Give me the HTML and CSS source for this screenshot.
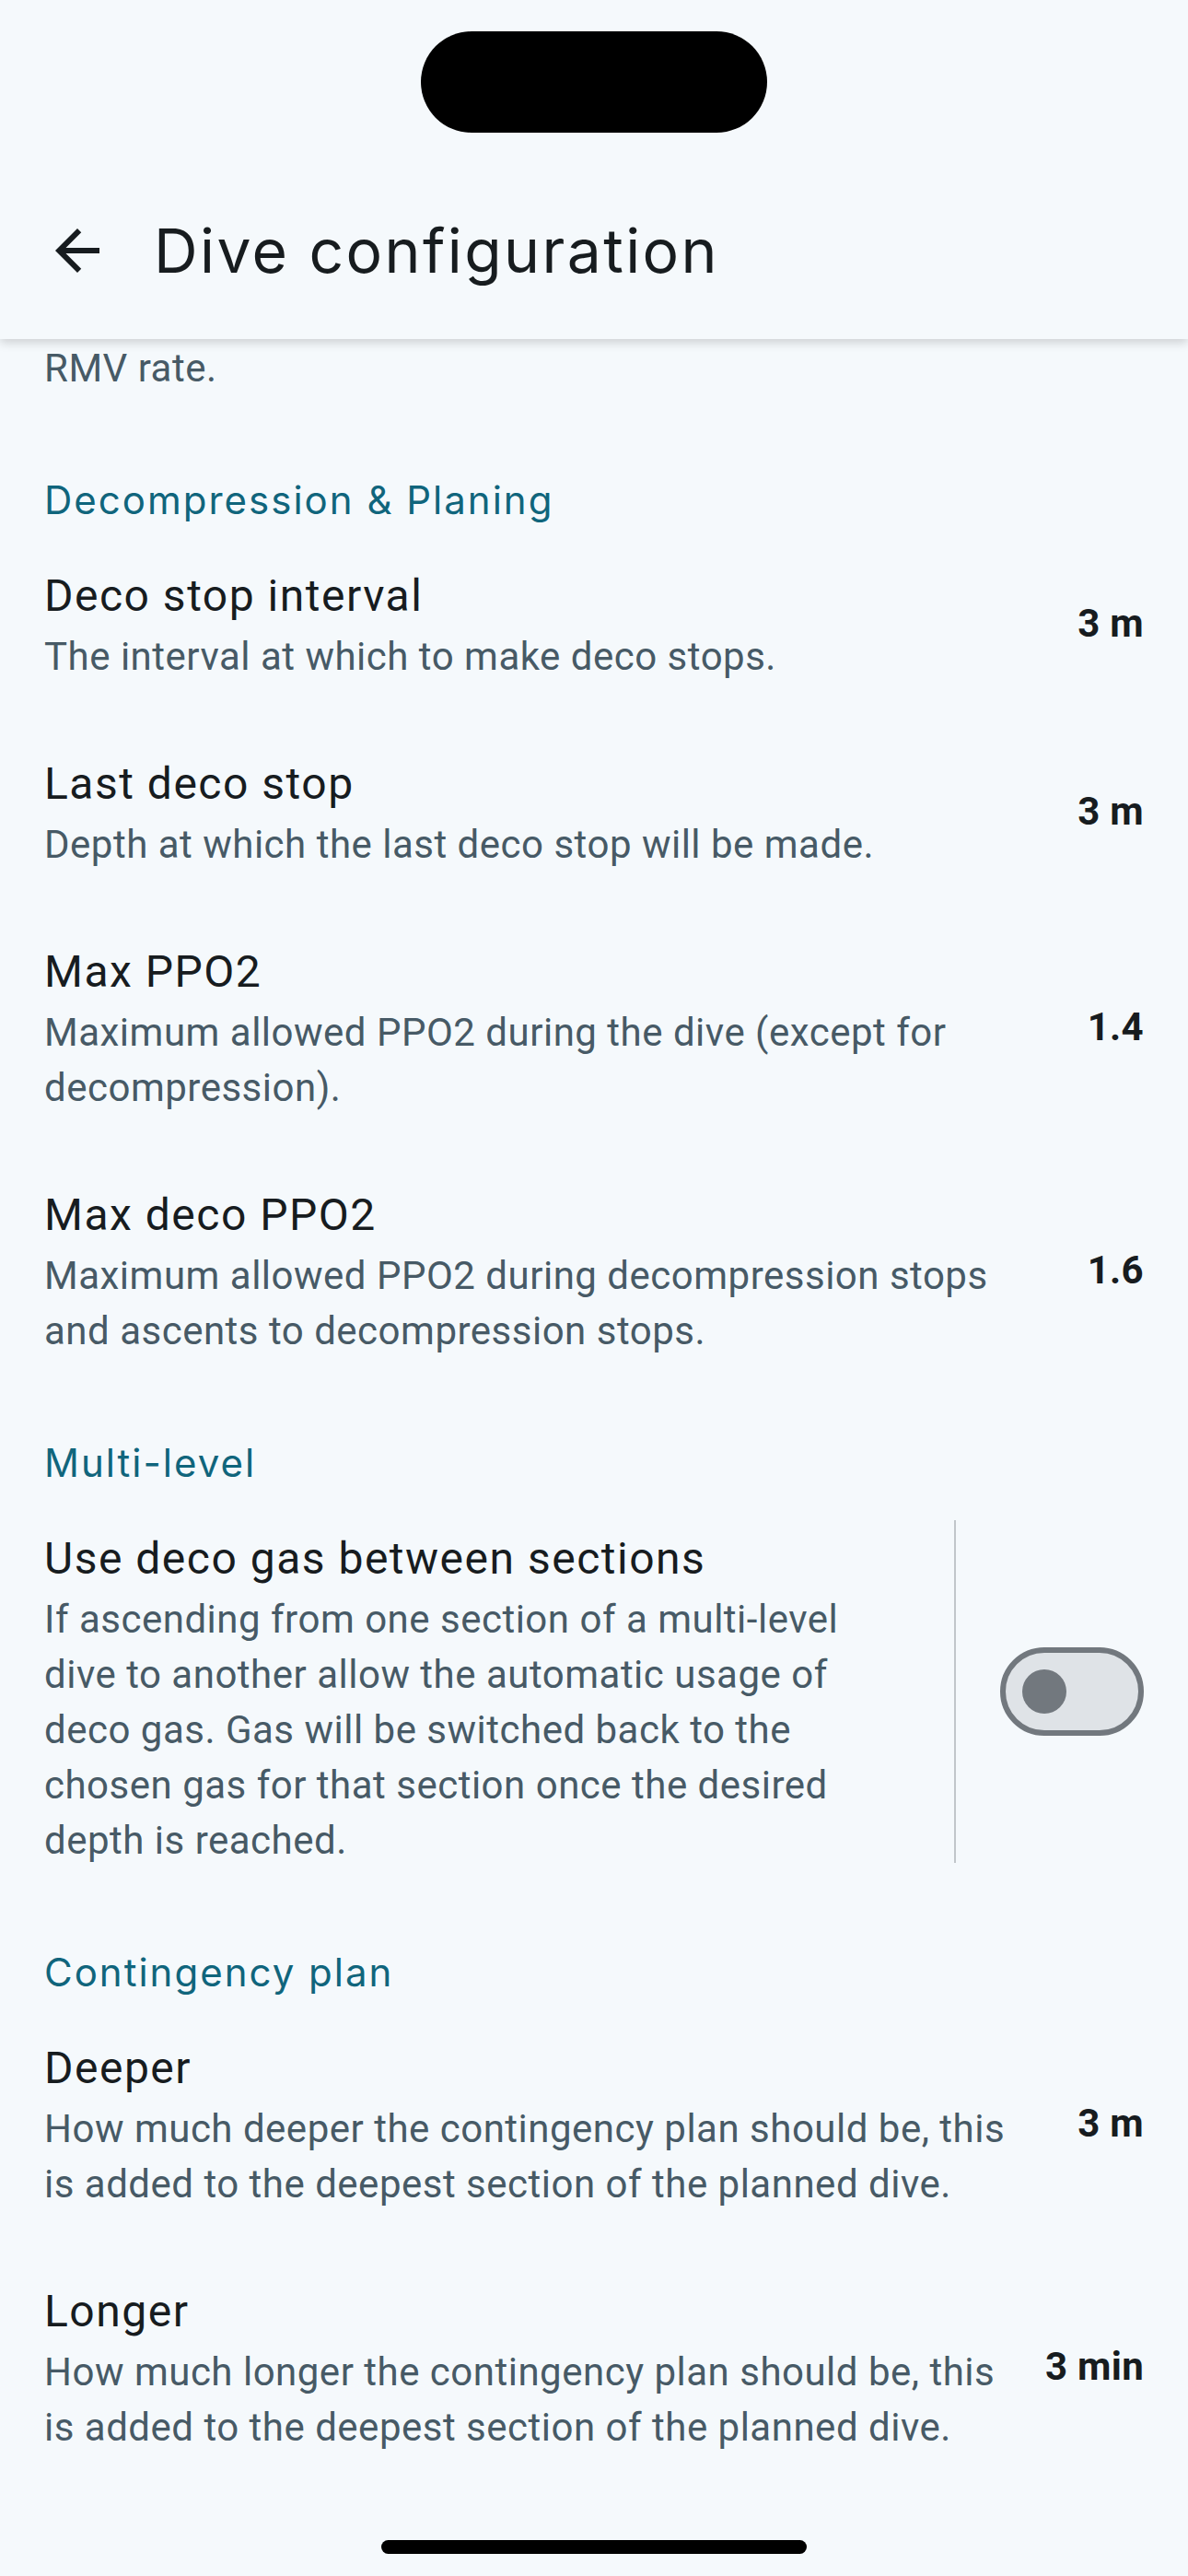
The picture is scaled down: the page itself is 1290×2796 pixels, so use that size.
FILE: index.html
```html
<!DOCTYPE html>
<html lang="en">
<head>
<meta charset="utf-8">
<title>Dive configuration</title>
<link rel="stylesheet" href="styles.css">
</head>
<body>
<div class="status">
  <div class="notch"></div>
</div>
<header class="topbar">
  <svg class="back" viewBox="0 0 24 24" width="72" height="72" aria-hidden="true">
    <path d="M20 11H7.83l5.59-5.59L12 4l-8 8 8 8 1.41-1.41L7.83 13H20v-2z" fill="#171c1f"/>
  </svg>
  <h1 class="title">Dive configuration</h1>
</header>
<main class="content">
  <div class="item partial">
    <div class="text">
      <div class="desc">RMV rate.</div>
    </div>
  </div>

  <div class="cat">Decompression &amp; Planing</div>

  <div class="item">
    <div class="text">
      <div class="name">Deco stop interval</div>
      <div class="desc">The interval at which to make deco stops.</div>
    </div>
    <div class="value">3 m</div>
  </div>

  <div class="item">
    <div class="text">
      <div class="name">Last deco stop</div>
      <div class="desc">Depth at which the last deco stop will be made.</div>
    </div>
    <div class="value">3 m</div>
  </div>

  <div class="item">
    <div class="text">
      <div class="name">Max PPO2</div>
      <div class="desc">Maximum allowed PPO2 during the dive (except for decompression).</div>
    </div>
    <div class="value">1.4</div>
  </div>

  <div class="item">
    <div class="text">
      <div class="name">Max deco PPO2</div>
      <div class="desc">Maximum allowed PPO2 during decompression stops and ascents to decompression stops.</div>
    </div>
    <div class="value">1.6</div>
  </div>

  <div class="cat">Multi-level</div>

  <div class="item switch-item">
    <div class="text">
      <div class="name">Use deco gas between sections</div>
      <div class="desc">If ascending from one section of a multi-level dive to another allow the automatic usage of deco gas. Gas will be switched back to the chosen gas for that section once the desired depth is reached.</div>
    </div>
    <div class="divider"></div>
    <div class="switch"><span class="thumb"></span></div>
  </div>

  <div class="cat">Contingency plan</div>

  <div class="item">
    <div class="text">
      <div class="name">Deeper</div>
      <div class="desc">How much deeper the contingency plan should be, this is added to the deepest section of the planned dive.</div>
    </div>
    <div class="value">3 m</div>
  </div>

  <div class="item">
    <div class="text">
      <div class="name">Longer</div>
      <div class="desc">How much longer the contingency plan should be, this is added to the deepest section of the planned dive.</div>
    </div>
    <div class="value">3 min</div>
  </div>
</main>
<div class="home-indicator"></div>
</body>
</html>
```

FILE: styles.css
```css
* {
  box-sizing: border-box;
}

html, body {
  margin: 0;
  padding: 0;
  background: #f5f9fc;
}

body {
  width: 1290px;
  min-height: 2796px;
  font-family: Roboto, "Liberation Sans", sans-serif;
  color: #171c1f;
  overflow: hidden;
}

.status {
  height: 176px;
  padding-top: 34px;
  display: flex;
  justify-content: center;
}

.notch {
  width: 376px;
  height: 110px;
  border-radius: 55px;
  background: #000;
}

.topbar {
  height: 192px;
  display: flex;
  align-items: center;
  padding-left: 48px;
  background: #f5f9fc;
  box-shadow: 0 4px 10px rgba(0, 0, 0, 0.16);
  clip-path: inset(0 0 -40px 0);
  position: relative;
  z-index: 2;
}

.back {
  display: block;
  flex: none;
}

.title {
  margin: 0 0 0 47px;
  font-family: Inter, "Open Sans", sans-serif;
  font-weight: 400;
  font-size: 66px;
  line-height: 84px;
  color: #171c1f;
  letter-spacing: 2.4px;
}

.content {
  display: flex;
  flex-direction: column;
}

.item {
  display: flex;
  align-items: center;
  padding: 36px 48px;
}

.item.partial {
  padding-top: 2px;
}

.text {
  flex: 1;
  min-width: 0;
}

.name {
  font-size: 48px;
  line-height: 72px;
  letter-spacing: 1.5px;
  color: #171c1f;
}

.desc {
  font-size: 42px;
  line-height: 60px;
  letter-spacing: 0.5px;
  color: #475a66;
}

.value {
  flex: none;
  margin-left: 48px;
  font-size: 42px;
  line-height: 60px;
  font-weight: 700;
  color: #171c1f;
  letter-spacing: 0.3px;
}

.cat {
  padding: 47px 48px 2px;
  font-family: Inter, "Open Sans", sans-serif;
  font-size: 42px;
  line-height: 60px;
  letter-spacing: 2px;
  color: #10657c;
}

.divider {
  flex: none;
  align-self: stretch;
  width: 2px;
  margin: -6px 0 6px 48px;
  background: #c1c6ca;
}

.switch {
  flex: none;
  width: 156px;
  height: 96px;
  margin: 0 0 12px 48px;
  border: 6px solid #72787e;
  border-radius: 48px;
  background: #dfe3e7;
  display: flex;
  align-items: center;
  padding-left: 18px;
}

.thumb {
  display: block;
  width: 48px;
  height: 48px;
  border-radius: 50%;
  background: #72787e;
}

.home-indicator {
  position: fixed;
  left: 414px;
  bottom: 24px;
  width: 462px;
  height: 15px;
  border-radius: 8px;
  background: #000;
}
```
